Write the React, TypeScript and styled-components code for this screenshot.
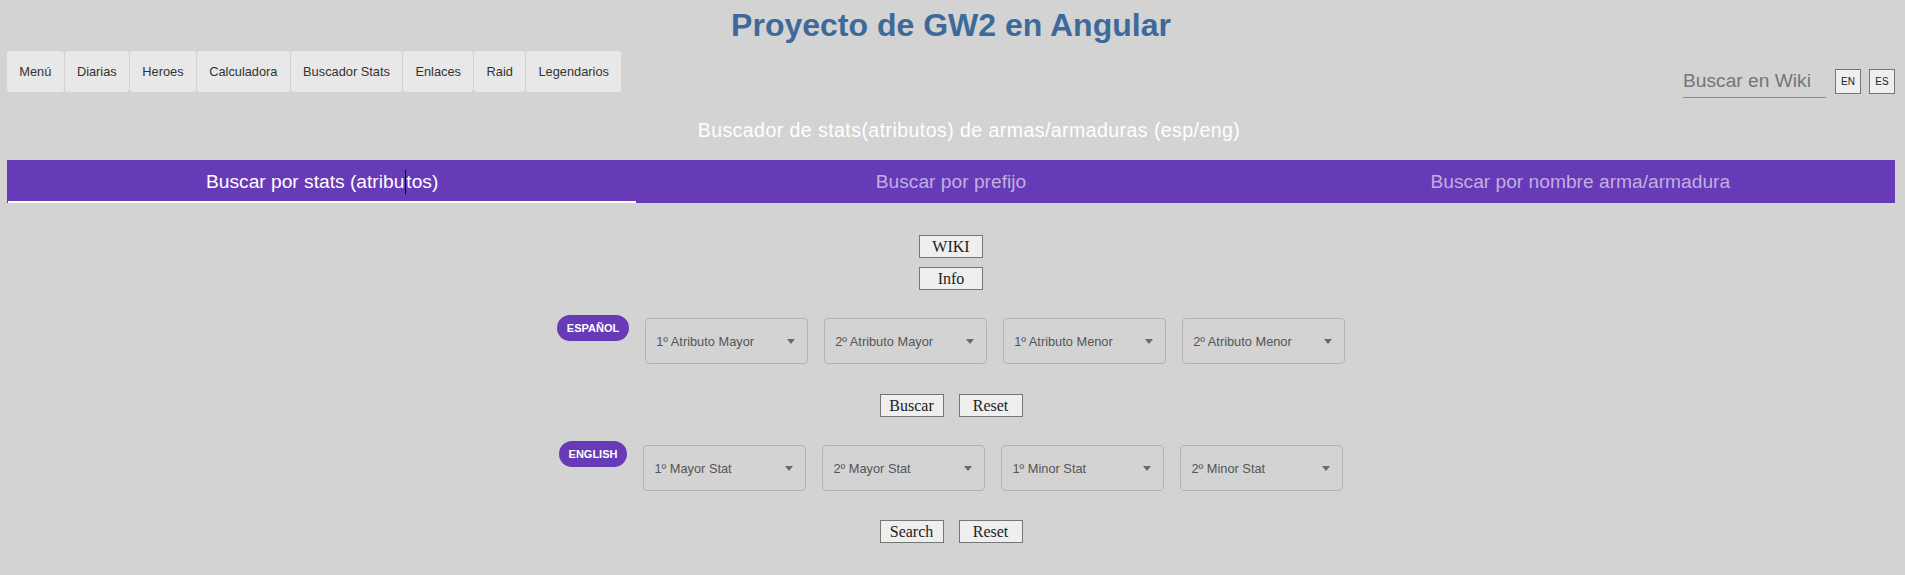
import React from "react";
import styled, { createGlobalStyle } from "styled-components";

const GlobalStyle = createGlobalStyle`
  html, body { margin: 0; padding: 0; background: #d3d3d3; }
  body { font-family: "Liberation Sans", Arial, sans-serif; }
  * { box-sizing: border-box; }
`;

const Page = styled.div`
  min-height: 575px;
  padding: 0 10px 0 7px;
  background: #d3d3d3;
`;

const Title = styled.h1`
  margin: 0;
  padding-top: 7px;
  text-align: center;
  font-size: 32px;
  line-height: 37px;
  font-weight: bold;
  color: #3d6a9a;
`;

const TopBar = styled.div`
  display: flex;
  justify-content: space-between;
  align-items: flex-start;
  margin-top: 7px;
`;

const Nav = styled.nav`
  display: flex;
  gap: 1px;
  height: 41px;
`;

const NavItem = styled.a`
  display: flex;
  align-items: center;
  padding: 0 12.3px;
  background: #e8e8e8;
  border-radius: 3px;
  font-size: 12.8px;
  color: #333;
  text-decoration: none;
`;

const SearchGroup = styled.div`
  display: flex;
  align-items: center;
  gap: 8px;
  margin-top: 14px;
`;

const WikiInput = styled.input`
  width: 143px;
  height: 33px;
  margin-right: 1px;
  padding: 0;
  border: none;
  border-bottom: 1px solid #8a8a8a;
  background: transparent;
  font-family: "Liberation Sans", Arial, sans-serif;
  font-size: 19.2px;
  color: #333;
  outline: none;
  &::placeholder { color: #767676; }
`;

const LangButton = styled.button`
  width: 26px;
  height: 25px;
  padding: 0;
  border: 1px solid #767676;
  background: #efefef;
  font-family: "Liberation Sans", Arial, sans-serif;
  font-size: 10px;
  color: #222;
`;

const Subtitle = styled.div`
  margin-top: 20px;
  padding-left: 36px;
  text-align: center;
  color: #fff;
  font-size: 19.5px;
  letter-spacing: 0.45px;
  line-height: 24px;
`;

const Tabs = styled.div`
  display: grid;
  grid-template-columns: repeat(3, 1fr);
  height: 43px;
  margin-top: 18px;
  background: #673ab7;
`;

const Tab = styled.div<{ $active?: boolean }>`
  display: flex;
  align-items: center;
  justify-content: center;
  font-size: 19.2px;
  color: ${(p) => (p.$active ? "#ffffff" : "rgba(255,255,255,0.6)")};
  box-shadow: ${(p) => (p.$active ? "inset 0 -2px 0 #ffffff" : "none")};
  margin-left: ${(p) => (p.$active ? "1px" : "0")};
`;

const Caret = styled.span`
  display: inline-block;
  width: 1px;
  min-width: 1px;
  height: 24px;
  margin: 0 0.5px;
  vertical-align: -6px;
  background: #000;
`;

const Content = styled.div`
  display: flex;
  flex-direction: column;
  align-items: center;
`;

const SerifButton = styled.button<{ $mt: number }>`
  width: 64px;
  height: 23px;
  margin-top: ${(p) => p.$mt}px;
  padding: 0;
  border: 1px solid #767676;
  background: #efefef;
  font-family: "Liberation Serif", "Times New Roman", serif;
  font-size: 16px;
  color: #222;
`;

const ButtonRow = styled.div<{ $mt: number }>`
  display: flex;
  gap: 15px;
  margin-top: ${(p) => p.$mt}px;
`;

const LangRow = styled.div<{ $mt: number }>`
  display: flex;
  align-items: flex-start;
  gap: 16px;
  margin-top: ${(p) => p.$mt}px;
`;

const Badge = styled.span`
  display: flex;
  align-items: center;
  height: 26px;
  padding: 0 10px;
  border-radius: 13px;
  background: #673ab7;
  color: #fff;
  font-size: 11px;
  font-weight: bold;
`;

const Selects = styled.div<{ $mt: number }>`
  display: flex;
  gap: 16px;
  margin-top: ${(p) => p.$mt}px;
`;

const Select = styled.div`
  display: flex;
  align-items: center;
  justify-content: space-between;
  width: 163px;
  height: 46px;
  padding: 0 12px 0 10px;
  border: 1px solid #b3b3b3;
  border-radius: 4px;
  font-size: 12.8px;
  color: #555;
`;

const Arrow = styled.span`
  width: 0;
  height: 0;
  border-left: 4.5px solid transparent;
  border-right: 4.5px solid transparent;
  border-top: 5px solid #6b6b6b;
`;

const navItems = ["Menú", "Diarias", "Heroes", "Calculadora", "Buscador Stats", "Enlaces", "Raid", "Legendarios"];
const esSelects = ["1º Atributo Mayor", "2º Atributo Mayor", "1º Atributo Menor", "2º Atributo Menor"];
const enSelects = ["1º Mayor Stat", "2º Mayor Stat", "1º Minor Stat", "2º Minor Stat"];

export default function App() {
  return (
    <Page>
      <GlobalStyle />
      <Title>Proyecto de GW2 en Angular</Title>
      <TopBar>
        <Nav>
          {navItems.map((n) => (
            <NavItem key={n}>{n}</NavItem>
          ))}
        </Nav>
        <SearchGroup>
          <WikiInput placeholder="Buscar en Wiki" />
          <LangButton>EN</LangButton>
          <LangButton>ES</LangButton>
        </SearchGroup>
      </TopBar>
      <Subtitle>Buscador de stats(atributos) de armas/armaduras (esp/eng)</Subtitle>
      <Tabs>
        <Tab $active>
          <span>
            Buscar por stats (atribu<Caret />tos)
          </span>
        </Tab>
        <Tab>Buscar por prefijo</Tab>
        <Tab>Buscar por nombre arma/armadura</Tab>
      </Tabs>
      <Content>
        <SerifButton $mt={32}>WIKI</SerifButton>
        <SerifButton $mt={9}>Info</SerifButton>
        <LangRow $mt={25}>
          <Badge>ESPAÑOL</Badge>
          <Selects $mt={3}>
            {esSelects.map((s) => (
              <Select key={s}>
                {s}
                <Arrow />
              </Select>
            ))}
          </Selects>
        </LangRow>
        <ButtonRow $mt={30}>
          <SerifButton $mt={0}>Buscar</SerifButton>
          <SerifButton $mt={0}>Reset</SerifButton>
        </ButtonRow>
        <LangRow $mt={24}>
          <Badge>ENGLISH</Badge>
          <Selects $mt={4}>
            {enSelects.map((s) => (
              <Select key={s}>
                {s}
                <Arrow />
              </Select>
            ))}
          </Selects>
        </LangRow>
        <ButtonRow $mt={29}>
          <SerifButton $mt={0}>Search</SerifButton>
          <SerifButton $mt={0}>Reset</SerifButton>
        </ButtonRow>
      </Content>
    </Page>
  );
}
